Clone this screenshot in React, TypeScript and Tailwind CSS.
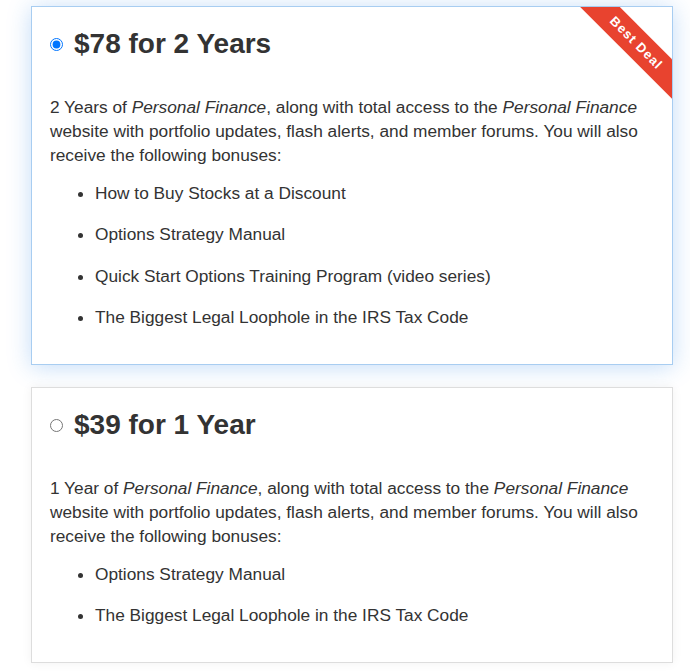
import { useState } from "react";

const plans = [
  {
    id: "2y",
    price: "$78 for 2 Years",
    lead: "2 Years of",
    bonuses: [
      "How to Buy Stocks at a Discount",
      "Options Strategy Manual",
      "Quick Start Options Training Program (video series)",
      "The Biggest Legal Loophole in the IRS Tax Code",
    ],
    best: true,
  },
  {
    id: "1y",
    price: "$39 for 1 Year",
    lead: "1 Year of",
    bonuses: ["Options Strategy Manual", "The Biggest Legal Loophole in the IRS Tax Code"],
    best: false,
  },
];

export default function App() {
  const [selected, setSelected] = useState("2y");

  return (
    <div className="min-h-screen bg-white pt-[6px] pl-[31px] pr-[18px] font-['Liberation_Sans',Arial,sans-serif] text-[#333]">
      <div className="flex w-[642px] flex-col gap-[22px]">
        {plans.map((plan) => {
          const isSelected = plan.id === selected;
          return (
            <label
              key={plan.id}
              className={`relative block cursor-pointer overflow-hidden border bg-white px-[18px] pt-[21px] pb-[35px] ${
                isSelected
                  ? "border-[#a8cdf1] shadow-[0_2px_22px_rgba(40,130,230,0.28)]"
                  : "border-[#dddddd] shadow-[0_0_10px_rgba(0,0,0,0.06)]"
              }`}
            >
              {plan.best && (
                <div className="absolute top-[22px] right-[-39px] flex h-[28px] w-[150px] rotate-45 items-center justify-center bg-[#e8432f] text-[13px] font-bold tracking-[1px] text-white">
                  Best Deal
                </div>
              )}
              <div className="flex items-center">
                <input
                  type="radio"
                  name="plan"
                  checked={isSelected}
                  onChange={() => setSelected(plan.id)}
                  className="m-0 h-[13px] w-[13px] accent-[#0075ff]"
                />
                <h2 className="ml-[11px] text-[28px] leading-[32px] font-bold text-[#333]">{plan.price}</h2>
              </div>
              <p className="mt-[35px] text-[17.3px] leading-[24px]">
                {plan.lead} <em>Personal Finance</em>, along with total access to the <em>Personal Finance</em> website
                with portfolio updates, flash alerts, and member forums. You will also receive the following bonuses:
              </p>
              <ul className="mt-[13.5px] flex list-disc flex-col gap-[17.5px] pl-[45px] text-[17.3px] leading-[24px]">
                {plan.bonuses.map((b) => (
                  <li key={b}>{b}</li>
                ))}
              </ul>
            </label>
          );
        })}
      </div>
    </div>
  );
}
